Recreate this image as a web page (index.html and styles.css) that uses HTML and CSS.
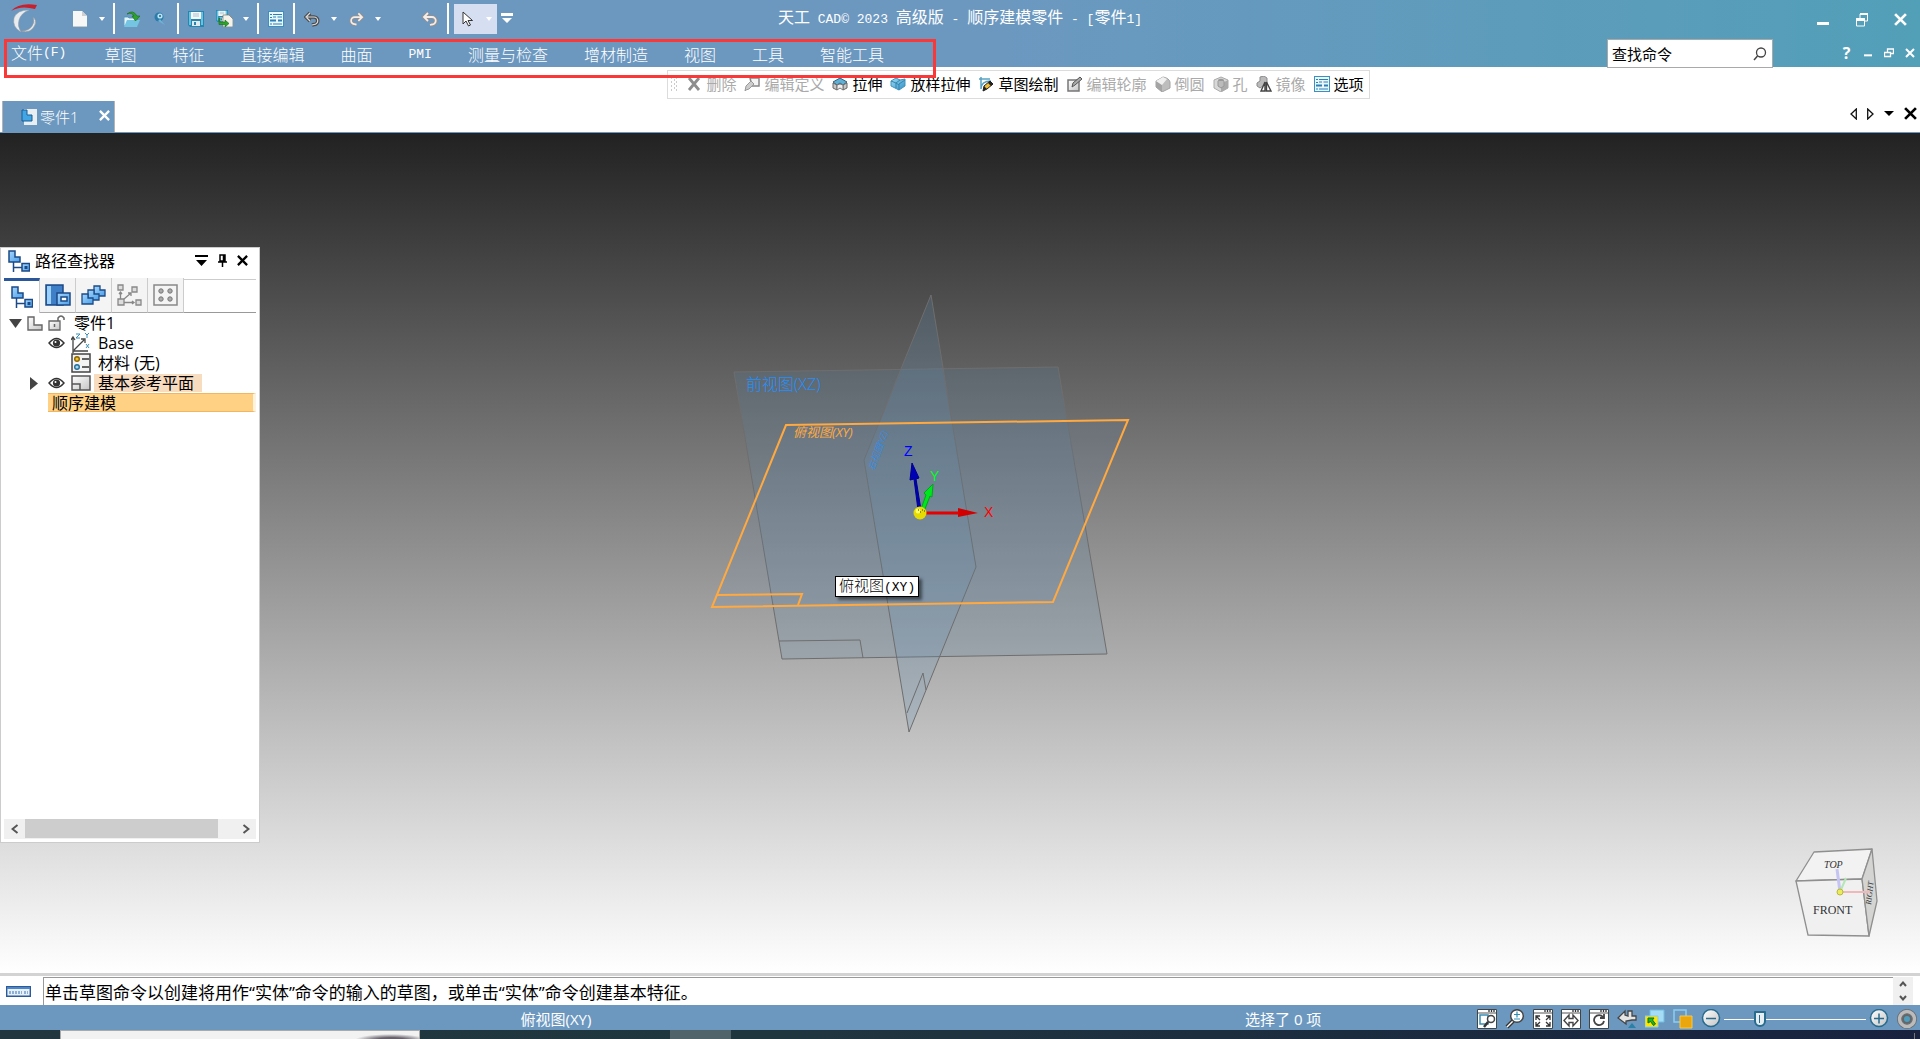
FILE: index.html
```
<!DOCTYPE html>
<html lang="zh-CN">

<head>
    <meta charset="UTF-8">
    <meta name="viewport" content="width=device-width, initial-scale=1.0">
    <title>天工 CAD 2023</title>
    <link rel="stylesheet" href="styles.css">
</head>

<body>
    <!-- shared icons -->
    <svg class="defs" aria-hidden="true">
        <defs>
            <linearGradient id="blue" x1="0" y1="0" x2="1" y2="1">
                <stop offset="0" stop-color="#9fdcf7" />
                <stop offset="1" stop-color="#2f8fc4" />
            </linearGradient>
            <linearGradient id="part" x1="0" y1="0" x2="1" y2="1">
                <stop offset="0" stop-color="#a5d6fb" />
                <stop offset="1" stop-color="#4aa0ea" />
            </linearGradient>
            <linearGradient id="gray" x1="0" y1="0" x2="1" y2="1">
                <stop offset="0" stop-color="#ffffff" />
                <stop offset="1" stop-color="#c4c4c4" />
            </linearGradient>
            <symbol id="caret" viewBox="0 0 6 4"><path d="M0 0h6L3 4z" fill="#fff" /></symbol>
            <symbol id="cross" viewBox="0 0 12 12"><path d="M1 1l10 10M11 1L1 11" stroke="currentColor" stroke-width="2.500" /></symbol>
            <symbol id="minimize" viewBox="0 0 12 12"><path d="M0 8h12v3H0z" fill="currentColor" /></symbol>
            <symbol id="restore" viewBox="0 0 12 14"><path d="M4 5V1h7.500v7H8M.5 6h8v7h-8z" fill="none" stroke="currentColor" /><path d="M0 5h9v3H0zM4 0h8v2H4z" fill="currentColor" /></symbol>
            <symbol id="undo" viewBox="0 0 16 16"><path d="M6 2L2 6l4 4M3 6h7a3.500 3.500 0 0 1 0 7.500L8 14" fill="none" stroke="#4c4c4c" stroke-width="3.600" /><path d="M6 2L2 6l4 4M3 6h7a3.500 3.500 0 0 1 0 7.500L8 14" fill="none" stroke="#ddd" stroke-width="1.200" /></symbol>
            <symbol id="undo-light" viewBox="0 0 16 16"><path d="M6 2L2 6l4 4M3 6h7a3.500 3.500 0 0 1 0 7.500L8 14" fill="none" stroke="#9a8f88" stroke-width="3.600" /><path d="M6 2L2 6l4 4M3 6h7a3.500 3.500 0 0 1 0 7.500L8 14" fill="none" stroke="#f3eeea" stroke-width="1.800" /></symbol>
            <symbol id="options" viewBox="0 0 16 16">
                <path d="M0 0h16v16H0z" fill="#3d8fc0" />
                <path d="M1 1h14v14H1z" fill="#e9f6fd" />
                <path d="M2 3h2v1H2zM2 6h2v1H2zM5 3h9v1H5zM5 5.500h3v1H5zM9.500 5.500H14v1H9.500zM2 8.500h6v2H2zM10 8.500h4v2h-4zM2 12.500h2v1H2zM5 12.500h9v1H5z" fill="#2c80b4" />
            </symbol>
            <symbol id="floppy" viewBox="0 0 16 16">
                <path d="M0 0h16v16H2l-2-2z" fill="#2586b0" />
                <path d="M1 1h2v13H1zM13 1h2v13h-2z" fill="#6cc0df" />
                <path d="M3 1h10v7H3z" fill="#f4f8fa" /><path d="M5 3h6M5 5h6" stroke="#a7c3cf" />
                <path d="M4 10h8v5H4z" fill="#dfe9ee" /><path d="M6 11h2v3H6z" fill="#2586b0" />
            </symbol>
            <symbol id="tree" viewBox="0 0 22 22">
                <path d="M1 1h6v6h5v5H1z" fill="url(#part)" stroke="#1c4a86" stroke-width="1.500" />
                <path d="M5.500 12v5.500H14M5.500 17v5" fill="none" stroke="#1c4a86" stroke-width="1.500" />
                <path d="M14 13.500h7.500v7.500H14z" fill="url(#part)" stroke="#1c4a86" stroke-width="1.500" /><path d="M16.500 16h3v3h-3z" fill="#1c4a86" />
            </symbol>
            <symbol id="eye" viewBox="0 0 17 12">
                <path d="M1 6q7.500-9 15 0-7.500 9-15 0z" fill="#fff" stroke="#333" stroke-width="1.400" />
                <circle cx="8.500" cy="6" r="3.600" fill="#333" /><circle cx="7.500" cy="5" r="1" fill="#fff" />
            </symbol>
            <symbol id="window" viewBox="0 0 20 20"><path d="M.5.5h19v19H.5z" fill="#fff" stroke="#444" /><path d="M1 4h18" stroke="#555" /><path d="M12 1v2M14.500 1v2M17 1v2" stroke="#333" stroke-width="1.300" /></symbol>
        </defs>
    </svg>

    <header class="app-header">
        <div class="title-row">
            <div class="quick-bar">
                <svg class="logo" viewBox="0 0 27 30">
                    <path d="M0 7Q8-2 26 1L24 5Q10 1 0 7z" fill="#c8202c" />
                    <path d="M18 6Q6 6 3 14q-2 9 7 14-4-6-2-12 2-7 10-10z" fill="#e8ecef" stroke="#9aa0a6" stroke-width=".5" />
                    <path d="M22 13q4 3 2 8-4 9-14 6 8 0 11-5 3-4 1-9z" fill="#e4e7ea" stroke="#8d949b" stroke-width=".6" />
                </svg>
                <button class="tool first" aria-label="新建"><svg width="14" height="16" viewBox="0 0 14 16"><path d="M0 0h9l5 5v11H0z" fill="#f7f7f7" /><path d="M9 0v5h5z" fill="#cfcfcf" /><path d="M0 15h14v1H0z" fill="#c9c9c9" /></svg></button>
                <button class="drop" aria-label="新建选项"><svg><use href="#caret" /></svg></button>
                <span class="sep"></span>
                <button class="tool" aria-label="打开"><svg width="16" height="16" viewBox="0 0 16 16"><path d="M0 6h4l1 1h8v8H0z" fill="#e8f3f8" stroke="#3b93bc" stroke-width=".8" /><path d="M3 9h13l-3 7H0z" fill="#74c4e2" /><path d="M3 3q6-5 10 2h3l-4.500 5L8 5h2Q8 1 3 3z" fill="#2ea32a" stroke="#146a16" stroke-width=".6" /></svg></button>
                <button class="tool" aria-label="固定"><svg width="12" height="14" viewBox="0 0 12 14"><circle cx="5" cy="5" r="4.500" fill="#2b7ca8" /><circle cx="6" cy="4" r="2.600" fill="#b9e2f3" /><path d="M6 7l5 6-7-4z" fill="#6fb2d3" /><circle cx="6" cy="4" r="1" fill="#1e678f" /></svg></button>
                <span class="sep"></span>
                <button class="tool" aria-label="保存"><svg width="16" height="16"><use href="#floppy" /></svg></button>
                <button class="tool" aria-label="另存为"><svg width="17" height="17" viewBox="0 0 17 17"><use href="#floppy" width="12" height="12" /><path d="M7 5h6l4 4v8H7z" fill="#f6f2ea" stroke="#776" stroke-width=".7" /><path d="M4 8v4h5v-2l4 3.500L9 17v-2.500H3V8z" fill="#2ea32a" stroke="#146a16" stroke-width=".6" /></svg></button>
                <button class="drop" aria-label="保存选项"><svg><use href="#caret" /></svg></button>
                <span class="sep"></span>
                <button class="tool" aria-label="选项"><svg width="16" height="16"><use href="#options" /></svg></button>
                <span class="sep"></span>
                <button class="tool" aria-label="撤消"><svg width="16" height="16"><use href="#undo" /></svg></button>
                <button class="drop" aria-label="撤消列表"><svg><use href="#caret" /></svg></button>
                <button class="tool redo" aria-label="重做"><svg width="15" height="16"><use href="#undo-light" /></svg></button>
                <button class="drop" aria-label="重做列表"><svg><use href="#caret" /></svg></button>
                <button class="tool back" aria-label="上一步"><svg width="16" height="16"><use href="#undo-light" /></svg></button>
                <span class="sep"></span>
                <button class="select-tool" aria-label="选择"><svg width="12" height="16" viewBox="0 0 12 16"><path d="M1 1v12l3-3 2.500 5 2-1L6 9.500h4.500z" fill="#fff" stroke="#333" /></svg><svg width="6" height="4"><use href="#caret" /></svg></button>
                <button class="customize" aria-label="自定义"><svg width="12" height="10" viewBox="0 0 12 10"><path d="M0 0h12v3H0zM1 5h10L6 10z" fill="#fff" /></svg></button>
            </div>
            <h1 class="app-title">天工<span class="mono"> CAD© 2023 </span>高级版<span class="mono"> - </span>顺序建模零件<span class="mono"> - [</span>零件<span class="mono">1]</span></h1>
            <div class="window-controls">
                <button aria-label="最小化"><svg width="12" height="12"><use href="#minimize" /></svg></button>
                <button aria-label="还原"><svg width="12" height="14"><use href="#restore" /></svg></button>
                <button aria-label="关闭"><svg width="13" height="13"><use href="#cross" /></svg></button>
            </div>
        </div>
        <div class="menu-row">
            <nav class="menu">
                <button class="file">文件<span class="mono">(F)</span></button>
                <button>草图</button>
                <button>特征</button>
                <button>直接编辑</button>
                <button>曲面</button>
                <button><span class="mono">PMI</span></button>
                <button>测量与检查</button>
                <button>增材制造</button>
                <button>视图</button>
                <button>工具</button>
                <button>智能工具</button>
            </nav>
            <label class="search">
                <input type="text" value="查找命令" aria-label="查找命令">
                <svg width="14" height="14" viewBox="0 0 14 14"><circle cx="8" cy="5.500" r="4.500" fill="none" stroke="#444" stroke-width="1.300" /><path d="M4.500 9L1 13" stroke="#444" stroke-width="1.500" /></svg>
            </label>
            <div class="doc-controls">
                <button class="help" aria-label="帮助">?</button>
                <button aria-label="最小化文档"><svg width="8" height="10"><use href="#minimize" /></svg></button>
                <button aria-label="还原文档"><svg width="10" height="10" viewBox="0 0 10 10"><path d="M3.500 4V1h6v4.500H7M.5 4.500h6v4h-6z" fill="none" stroke="#fff" stroke-width="1.300" /></svg></button>
                <button aria-label="关闭文档"><svg width="10" height="10" viewBox="0 0 10 10"><path d="M1 1l8 8M9 1L1 9" stroke="#fff" stroke-width="2" /></svg></button>
            </div>
        </div>
    </header>

    <div class="command-row">
        <div class="command-bar">
            <svg class="grip" width="7" height="14" viewBox="0 0 7 14"><path d="M0 1h1M5 1h1M3 3h1M0 5h1M5 5h1M3 7h1M0 9h1M5 9h1M3 11h1M0 13h1M5 13h1" stroke="#999" /></svg>
            <button disabled><svg viewBox="0 0 16 16"><path d="M3 2l10 12M13 2L3 14" stroke="#8d8d8d" stroke-width="2.800" /></svg>删除</button>
            <button disabled><svg viewBox="0 0 16 16"><path d="M6 2h9v8H8z" fill="#f4f4f4" stroke="#888" stroke-width="1.500" /><path d="M2 10l5-5 3 3-5 5-3 1-1 1z" fill="#ccc" stroke="#999" /></svg>编辑定义</button>
            <button><svg viewBox="0 0 16 16"><path d="M1 6l7-4 7 4-4 3-3-2-3 2z" fill="#5fb0d4" stroke="#2a6280" /><path d="M1 7l4 2v5l-4-2zM11 9l4-2v5l-4 2z" fill="#c8c8c8" stroke="#666" /><path d="M5 9l3-1 3 1v5l-3-2-3 2z" fill="#eee" stroke="#777" /></svg>拉伸</button>
            <button><svg viewBox="0 0 16 16"><path d="M1 5l5-3 4 2 5-1v7l-6 4-8-4z" fill="url(#blue)" stroke="#4193bb" /><path d="M1 5l5 2 4-3M6 7v5M9 14V8l6-4M6 7l3 2" fill="none" stroke="#3584ae" /></svg>放样拉伸</button>
            <button><svg viewBox="0 0 16 16"><path d="M1 3h11M3 1v12M3 13Q3 5 13 5" fill="none" stroke="#57a2c4" stroke-width="1.500" /><path d="M5 15l1-5 6-5 3 3-6 5z" fill="#f0bd38" stroke="#222" /><path d="M5 15l1-5 3 3zM12 5l3 3-2 2-3-3z" fill="#222" /></svg>草图绘制</button>
            <button disabled><svg viewBox="0 0 16 16"><path d="M1 4h11v11H1z" fill="url(#gray)" stroke="#777" stroke-width="1.500" /><path d="M5 11l1-4 7-6 2 2-7 6z" fill="#aaa" stroke="#555" /></svg>编辑轮廓</button>
            <button disabled><svg viewBox="0 0 16 16"><path d="M1 5l7-4q6 1 7 5v6l-8 4-6-5z" fill="#bdbdbd" stroke="#a2a2a2" /><path d="M1 5l6 4v7l-6-5z" fill="#a4a4a4" /><path d="M1 5l7-4 4 2-5 6z" fill="#f0f0f0" /></svg>倒圆</button>
            <button disabled><svg viewBox="0 0 16 16"><path d="M1 4l7-3 7 3v8l-7 4-7-4z" fill="#d8d8d8" stroke="#aaa" /><path d="M8 8l7-4v8l-7 4z" fill="#aaa" /><ellipse cx="8" cy="4.500" rx="3" ry="1.700" fill="#999" /><path d="M5 5v5l3 2 3-2V5" fill="#bbb" stroke="#999" /></svg>孔</button>
            <button disabled><svg viewBox="0 0 16 16"><path d="M4 1l4-1 3 2v5L4 12l-3-2V7l3-2z" fill="#bbb" stroke="#8b8b8b" /><path d="M5 15l4-9v9zM10.500 6l4.500 9h-4.500z" fill="#fff" stroke="#444" stroke-width="1.400" /></svg>镜像</button>
            <button><svg viewBox="0 0 16 16"><use href="#options" /></svg>选项</button>
        </div>
    </div>

    <div class="tab-row">
        <div class="doc-tab">
            <svg width="16" height="16" viewBox="0 0 16 16"><path d="M3 0h13v16H3z" fill="#e9eef2" /><path d="M1 1h5v5h5v6H1z" fill="#43a6e4" stroke="#185f96" /></svg>
            <span>零件1</span>
            <button aria-label="关闭零件1"><svg width="11" height="11"><use href="#cross" /></svg></button>
        </div>
        <div class="tab-nav">
            <button aria-label="上一个"><svg width="7" height="12" viewBox="0 0 7 12"><path d="M6.300 1v10L1 6z" fill="none" stroke="#111" stroke-width="1.300" /></svg></button>
            <button aria-label="下一个"><svg width="7" height="12" viewBox="0 0 7 12"><path d="M.7 1v10L6 6z" fill="none" stroke="#111" stroke-width="1.300" /></svg></button>
            <button aria-label="列表"><svg width="10" height="5" viewBox="0 0 10 5"><path d="M0 0h10L5 5z" /></svg></button>
            <button aria-label="关闭"><svg width="13" height="13"><use href="#cross" /></svg></button>
        </div>
    </div>

    <main class="viewport">
        <svg class="scene" viewBox="0 0 1920 840">
            <g class="plane">
                <path d="M734 239L1058 234 1107 521 782 526z" />
                <path class="line" d="M779 508l81-1 3 18" />
                <path class="right" d="M931 162L976 434 909 599 864 327z" />
                <path class="line" d="M907 580l16-40 3 17" />
            </g>
            <g class="plane-active">
                <path d="M786 292L1128 287 1053 469 712 474z" />
                <path class="line" d="M716 462l86-1-4 11" />
            </g>
            <text class="label-front" x="746" y="257">前视图(XZ)</text>
            <text class="label-top" x="793" y="304">俯视图(XY)</text>
            <text class="label-right" transform="translate(874 338) rotate(-70)">右视图(YZ)</text>
            <!-- origin triad -->
            <path d="M918 377l-4-31-4 1 2-17 7 15-3 1 5 31z" fill="#0000b4" stroke="#00008c" />
            <path d="M921 376l5-14-2-2 9-9-1 13-2-1-5 13z" fill="#00e61e" stroke="#00a814" />
            <path d="M958 375l20 5-20 4z" fill="#d20000" /><path d="M926 380h33" stroke="#e60000" stroke-width="3" />
            <circle cx="920" cy="380" r="6.500" fill="#e6dc00" /><circle cx="918" cy="378" r="2.500" fill="#ffff66" />
            <path d="M918 377h1M922 377h1M920 379h1M924 378h1" stroke="#333" />
            <text class="axis" x="904" y="323" fill="#0000ff">Z</text>
            <text class="axis" x="930" y="348" fill="#00ff1e">Y</text>
            <text class="axis" x="984" y="384" fill="#ff0000">X</text>
        </svg>

        <svg class="view-cube" width="90" height="95" viewBox="0 0 90 95">
            <g stroke="#8f8f8f" stroke-width="1.300" stroke-linejoin="round">
                <path d="M4 36L22 7 80 4 70 34z" fill="#f2f2f2" />
                <path d="M4 36l66-2 7 57-61-1z" fill="#f0f0f0" />
                <path d="M70 34L80 4l5 52-8 35z" fill="#d4d4d2" />
            </g>
            <text class="cube-top" x="32" y="23">TOP</text>
            <text class="cube-front" x="21" y="69">FRONT</text>
            <text class="cube-right" transform="translate(79 60) rotate(-84)">RIGHT</text>
            <path d="M48 47l-3-23" stroke="#c4c4f2" stroke-width="3" /><path d="M48 47l6-14" stroke="#b4e6b8" stroke-width="2" /><path d="M48 47h30" stroke="#f0b8b8" stroke-width="2" />
            <circle cx="48" cy="47" r="3" fill="#ecec5a" stroke="#b8b83a" />
        </svg>

        <div class="tooltip" role="tooltip">俯视图<span class="mono">(XY)</span></div>

        <aside class="pathfinder">
            <div class="panel-head">
                <svg width="22" height="22"><use href="#tree" /></svg>
                <h2>路径查找器</h2>
                <button aria-label="选项"><svg width="13" height="12" viewBox="0 0 13 12"><path d="M0 0h13v2H0zM1 5h11l-5.500 6z" /></svg></button>
                <button aria-label="固定"><svg width="9" height="13" viewBox="0 0 9 13"><path d="M2 1h5v6H2zM5.500 1v6M0 8h9M4.500 8v5" fill="none" stroke="#000" stroke-width="1.500" /></svg></button>
                <button aria-label="关闭"><svg width="11" height="11"><use href="#cross" /></svg></button>
            </div>
            <div class="panel-tabs">
                <button class="active" aria-label="路径查找器"><svg width="22" height="22"><use href="#tree" /></svg></button>
                <button aria-label="零件库"><svg width="26" height="22" viewBox="0 0 26 22"><path d="M1 1h17v20H1z" fill="#3f7fc8" stroke="#1c4a86" stroke-width="1.500" /><path d="M2 2h4v18H2z" fill="#9bd0f8" /><path d="M12 9h13v12H12z" fill="url(#part)" stroke="#1c4a86" stroke-width="1.500" /><path d="M16 13h6v4h-6z" fill="#fff" stroke="#1c4a86" stroke-width="1.500" /></svg></button>
                <button aria-label="零件族"><svg width="25" height="20" viewBox="0 0 25 20"><g fill="url(#part)" stroke="#1c4a86" stroke-width="1.300"><path d="M13 1h6v4h5v6H13z" /><path d="M7 5h6v4h5v6H7z" /><path d="M1 9h6v4h5v6H1z" /></g></svg></button>
                <button aria-label="图层"><svg width="25" height="22" viewBox="0 0 25 22"><g fill="#ddd" stroke="#888" stroke-width="1.300"><path d="M1 1h5v5H1zM15 3h5v5h-5zM1 15h6v6H1zM19 16h5v5h-5z" /><path d="M3.500 15V8M7 15l7-6M7 18.500h10M2 10l1.500-2L5 10M11 9h3v3M15 17l2 1.500-2 1.500" fill="none" /></g></svg></button>
                <button aria-label="传感器"><svg width="25" height="22" viewBox="0 0 25 22"><path d="M1 1h23v20H1z" fill="#f4f4f4" stroke="#888" stroke-width="1.500" /><g fill="#aaa" stroke="#777"><circle cx="8" cy="7" r="2.200" /><circle cx="17" cy="7" r="2.200" /><circle cx="8" cy="15" r="2.200" /><circle cx="17" cy="15" r="2.200" /></g></svg></button>
                <span class="rest"></span>
            </div>
            <ul class="tree">
                <li class="root">
                    <svg width="13" height="9" viewBox="0 0 13 9"><path d="M0 0h13L6.500 9z" fill="#444" /></svg>
                    <svg width="16" height="15" viewBox="0 0 16 15"><path d="M1 1h6v8h8v5H1z" fill="url(#gray)" stroke="#666" stroke-width="1.400" /></svg>
                    <svg width="17" height="16" viewBox="0 0 17 16"><path d="M1 6h11v9H1z" fill="url(#gray)" stroke="#666" stroke-width="1.300" /><path d="M10 6V3q3-4 6 0v2M6.500 9v3" fill="none" stroke="#666" stroke-width="1.500" /></svg>
                    <span>零件1</span>
                </li>
                <li>
                    <svg class="eye"><use href="#eye" /></svg>
                    <svg class="icon" viewBox="0 0 20 20"><path d="M2 20V4M0 7l2-3 2 3M2 18h15M3 17L13 7M10 6h4v4" fill="none" stroke="#444" stroke-width="1.300" /><path d="M5 1h4L5 5h4M14 0l2 2 2-2M16 2v3M15 11l3 4M18 11l-3 4" fill="none" stroke="#3b8fb5" /></svg>
                    <span>Base</span>
                </li>
                <li>
                    <svg class="eye"></svg>
                    <svg class="icon" viewBox="0 0 20 20"><path d="M1 1h18v18H1z" fill="#f3f3f3" stroke="#444" stroke-width="1.500" /><circle cx="6" cy="6" r="2.300" fill="#f1c232" stroke="#8a6500" stroke-width="1.400" /><circle cx="6" cy="14" r="2.300" fill="#9fd8f2" stroke="#256c96" stroke-width="1.400" /><path d="M11 6h7M11 14h7" stroke="#333" stroke-width="1.500" /></svg>
                    <span>材料 (无)</span>
                </li>
                <li>
                    <svg class="expand" viewBox="0 0 8 13"><path d="M0 0v13l8-6.500z" fill="#444" /></svg>
                    <svg class="eye"><use href="#eye" /></svg>
                    <svg class="icon" viewBox="0 0 20 20"><path d="M1 3h18v14H1z" fill="url(#gray)" stroke="#555" stroke-width="1.500" /><path d="M1 11h8v6" fill="none" stroke="#555" stroke-width="1.500" /></svg>
                    <span class="hover">基本参考平面</span>
                </li>
                <li class="mode"><span>顺序建模</span></li>
            </ul>
            <div class="hscroll">
                <button aria-label="向左"><svg width="8" height="10" viewBox="0 0 8 10"><path d="M6.500 1l-5 4 5 4" /></svg></button>
                <span class="track"><span class="thumb"></span></span>
                <button aria-label="向右"><svg width="8" height="10" viewBox="0 0 8 10"><path d="M1.500 1l5 4-5 4" /></svg></button>
            </div>
        </aside>
    </main>

    <div class="prompt-bar">
        <svg width="25" height="11" viewBox="0 0 25 11"><path d="M.7.7h23.600v9.600H.7z" fill="#e8f1fa" stroke="#2a5a9c" stroke-width="1.400" /><path d="M1 1h23v2H1z" fill="#4f86c6" /><path d="M3 6.500h13M18 6.500h4" stroke="#8db0d8" stroke-width="3" stroke-dasharray="2 1" /></svg>
        <p>单击草图命令以创建将用作“实体”命令的输入的草图，或单击“实体”命令创建基本特征。</p>
        <div class="spinner">
            <button aria-label="向上"><svg width="8" height="6" viewBox="0 0 8 6"><path d="M1 5l3-3.500L7 5" /></svg></button>
            <button aria-label="向下"><svg width="8" height="6" viewBox="0 0 8 6"><path d="M1 1l3 3.500L7 1" /></svg></button>
        </div>
    </div>

    <footer class="status-bar">
        <span class="status-item">俯视图(XY)</span>
        <span class="status-count">选择了 0 项</span>
        <div class="view-tools">
            <button aria-label="缩放区域"><svg viewBox="0 0 20 20"><use href="#window" /><path d="M3 6h8v9H3z" fill="#fff" stroke="#3b8fb5" stroke-width="1.500" /><circle cx="14" cy="10" r="3.500" fill="#fff" stroke="#444" stroke-width="1.500" /><path d="M11 13l-4 5" stroke="#333" stroke-width="2.500" /></svg></button>
            <button aria-label="缩放"><svg viewBox="0 0 20 20"><path d="M8 12l-6 6" stroke="#333" stroke-width="4" /><path d="M8 12l-6 6" stroke="#fff" stroke-width="1.500" /><circle cx="12" cy="7" r="6.300" fill="#fff" stroke="#444" stroke-width="1.500" /><path d="M9 5.500h6M12 2.500v6M9 10h6" stroke="#2d8db5" stroke-width="1.200" /></svg></button>
            <button aria-label="适合"><svg viewBox="0 0 20 20"><use href="#window" /><path d="M7 7H3v4M3 13v4h4M13 7h4v4M17 13v4h-4M3 7l4 4M17 7l-4 4M3 17l4-4M17 17l-4-4" fill="none" stroke="#333" stroke-width="1.300" /></svg></button>
            <button aria-label="平移"><svg viewBox="0 0 20 20"><use href="#window" /><path d="M8 6l-5 5.500L8 17v-3.500h4V17l5-5.500L12 6v3.500H8z" fill="#fff" stroke="#444" stroke-width="1.400" /></svg></button>
            <button aria-label="旋转"><svg viewBox="0 0 20 20"><use href="#window" /><path d="M14 8a5 5 0 1 0 1 4M15 5v4h-4" fill="none" stroke="#444" stroke-width="1.800" /></svg></button>
            <button aria-label="注视"><svg viewBox="0 0 20 20"><path d="M1 9l7-7v4l3 1V2h4v5h4v4h-4l-6 1v3z" fill="#e4e4e4" stroke="#444" stroke-width="1.300" /><path d="M15 14l4 5h-8z" fill="#2c7fa5" /></svg></button>
            <button aria-label="视图样式"><svg viewBox="0 0 20 20"><path d="M5 1h14v12H5z" fill="#a5dcf4" stroke="#6dbfe2" /><path d="M0 7h13v11H0z" fill="#ffe600" stroke="#88cdee" /><path d="M3 9h6L7.500 11l3 4-2 1.500-3-4L3 14z" fill="#21b321" stroke="#0d700f" /></svg></button>
            <button aria-label="颜色"><svg viewBox="0 0 20 20"><path d="M1 1h12v12H1z" fill="none" stroke="#8ccdf0" stroke-width="1.500" /><path d="M7 7h12v12H7z" fill="#eaa60c" stroke="#f6c84a" /></svg></button>
            <button aria-label="缩小"><svg viewBox="0 0 20 20"><circle cx="10" cy="9" r="8.500" fill="url(#gray)" stroke="#276b8d" stroke-width="1.500" /><path d="M5 9.500h10" stroke="#276b8d" stroke-width="1.500" /></svg></button>
            <input type="range" min="0" max="100" value="23" aria-label="缩放比例">
            <button aria-label="放大"><svg viewBox="0 0 20 20"><circle cx="10" cy="9" r="8.500" fill="url(#gray)" stroke="#276b8d" stroke-width="1.500" /><path d="M5 9.500h10M10 4.500v10" stroke="#276b8d" stroke-width="1.500" /></svg></button>
            <button aria-label="设置"><svg viewBox="0 0 20 20"><circle cx="10" cy="10" r="7.500" fill="none" stroke="#666" stroke-width="5" /><circle cx="10" cy="10" r="7.500" fill="none" stroke="#bbb" stroke-width="3.500" /><circle cx="10" cy="10" r="4" fill="#4f9dbd" stroke="#666" stroke-width="2" /></svg></button>
        </div>
    </footer>

    <div class="taskbar">
        <span class="taskbar-search"></span>
        <span class="taskbar-app"></span>
        <span class="clock">11:50</span>
    </div>
</body>

</html>
```
FILE: styles.css
```
* {
    box-sizing: border-box;
}

body {
    margin: 0;
    height: 100vh;
    display: flex;
    flex-direction: column;
    overflow: hidden;
    background-color: #fff;
    color: #000;
    font-family: "Open Sans", "Noto Sans CJK SC", sans-serif;
    font-size: 16px;
    line-height: 20px;
}

h1,
h2,
p,
ul {
    margin: 0;
    padding: 0;
    font-size: 16px;
    font-weight: normal;
    list-style: none;
}

button {
    display: flex;
    align-items: center;
    justify-content: center;
    flex: none;
    margin: 0;
    padding: 0;
    border: none;
    background: none;
    color: inherit;
    font: inherit;
    white-space: nowrap;
}

svg {
    display: block;
    flex: none;
}

.defs {
    position: absolute;
    width: 0;
    height: 0;
}

.mono {
    font-family: "Liberation Mono", monospace;
    font-size: 13px;
    white-space: pre;
}

/* header */
.app-header {
    flex: none;
    height: 67px;
    background: linear-gradient(90deg, #6c98c0 0%, #6c98c0 52%, #529fb8 100%);
    color: #fff;
    font-weight: 300;
}

.title-row {
    display: grid;
    grid-template-columns: 1fr auto 1fr;
    align-items: center;
    height: 39px;
    padding-bottom: 2px;
}

.quick-bar {
    display: flex;
    align-items: center;
    gap: 4px;
    height: 36px;
    padding-left: 11px;
}

.logo {
    width: 27px;
    height: 30px;
}

.tool {
    width: 24px;
    height: 30px;
}

.tool.first {
    margin-left: 26px;
}

.tool.back {
    margin-left: 30px;
}

.redo svg {
    transform: scaleX(-1);
}

.drop {
    width: 12px;
    height: 30px;
}

.drop svg {
    width: 6px;
    height: 4px;
}

.sep {
    width: 2px;
    height: 31px;
    margin: 0 1px;
    background-color: #fff;
}

.select-tool {
    width: 43px;
    height: 30px;
    justify-content: space-between;
    padding: 0 5px 0 8px;
    background-color: #d5dff1;
}

.customize {
    padding-bottom: 2px;
}

.app-title {
    white-space: nowrap;
}

.window-controls {
    display: flex;
    justify-content: flex-end;
}

.window-controls button {
    width: 39px;
    height: 36px;
    padding-top: 2px;
}

.menu-row {
    display: flex;
    height: 28px;
}

/* nav frame hangs below the header */
.menu {
    position: relative;
    display: flex;
    gap: 36px;
    margin: 0 auto 0 4px;
    padding: 4px 52px 0 7px;
}

.menu::after {
    content: "";
    position: absolute;
    inset: 0 0 -11px 0;
    z-index: 2;
    border: 3px solid #fb3838;
    pointer-events: none;
}

.menu button {
    height: 23px;
}

.menu .file {
    height: 19px;
    padding-right: 2px;
}

.search {
    display: flex;
    align-items: center;
    width: 166px;
    height: 29px;
    padding: 0 5px 0 4px;
    border: 1px solid #a9a9a9;
    background-color: #fff;
}

.search input {
    flex: 1;
    min-width: 0;
    padding: 0;
    border: none;
    outline: none;
    color: #000;
    font: inherit;
    font-size: 15px;
    font-weight: 400;
}

.doc-controls {
    display: flex;
    margin-left: 63px;
}

.doc-controls button {
    width: 21px;
    height: 27px;
}

.doc-controls .help {
    font-size: 16px;
    font-weight: 700;
}

/* command bar */
.command-row {
    flex: none;
    display: flex;
    justify-content: center;
    padding: 3px 0 2px 117px;
}

.command-bar {
    display: flex;
    align-items: center;
    gap: 8px;
    height: 29px;
    padding: 0 5px 2px 3px;
    border: 1px solid #dcdcdc;
    font-size: 15px;
}

.command-bar button {
    gap: 4px;
}

.command-bar button svg {
    width: 16px;
    height: 16px;
}

.command-bar button:disabled {
    color: #aaa;
}

/* document tabs */
.tab-row {
    flex: none;
    display: flex;
    justify-content: space-between;
    height: 32px;
    border-bottom: 1px solid #6c98c0;
}

.doc-tab {
    display: flex;
    align-items: center;
    gap: 3px;
    width: 113px;
    margin-left: 2px;
    padding: 0 4px 0 18px;
    border: 1px solid #b4b4b4;
    border-width: 0 1px;
    background-color: #6c98c0;
    color: #fff;
    font-size: 15px;
    font-weight: 300;
}

.doc-tab button {
    margin-left: auto;
    padding-bottom: 2px;
}

.tab-nav {
    display: flex;
    align-items: center;
    gap: 10px;
    padding: 0 3px 6px 0;
}

/* model window */
.viewport {
    position: relative;
    flex: 1;
    min-height: 0;
    background: linear-gradient(#222 0%, #fff 100%);
}

.scene {
    width: 100%;
    height: 100%;
}

.plane path {
    fill: rgba(95, 135, 170, 0.2);
    stroke: #6e6e6e;
}

.plane .right {
    fill: rgba(95, 145, 190, 0.2);
}

.plane-active path {
    fill: rgba(95, 135, 170, 0.14);
    stroke: #ffa940;
    stroke-width: 2;
}

.plane .line,
.plane-active .line {
    fill: none;
}

.label-front,
.label-right {
    fill: #1e90ff;
    font-size: 16px;
    font-weight: 300;
}

.label-right {
    font-size: 9px;
    font-style: italic;
}

.label-top {
    fill: #ffa940;
    font-size: 13px;
    font-style: italic;
}

.axis {
    font-family: "Liberation Sans", sans-serif;
    font-size: 14px;
}

.view-cube {
    position: absolute;
    right: 38px;
    bottom: 33px;
}

.view-cube text {
    fill: #333;
    font-family: "Liberation Serif", serif;
    font-size: 12px;
}

.view-cube .cube-top {
    font-size: 10px;
    font-style: italic;
}

.view-cube .cube-right {
    font-size: 8px;
    font-style: italic;
}

.tooltip {
    position: absolute;
    top: 443px;
    left: calc(50% - 125px);
    padding: 0 3px;
    border: 1px solid #000;
    background-color: #fff;
    box-shadow: 3px 3px 3px rgba(0, 0, 0, 0.5);
    font-size: 15px;
    font-weight: 300;
    line-height: 16px;
}

/* pathfinder panel */
.pathfinder {
    position: absolute;
    top: 114px;
    bottom: 130px;
    left: 0;
    display: flex;
    flex-direction: column;
    width: 260px;
    padding: 0 3px;
    border: 1px solid #ccc;
    background-color: #fff;
}

.panel-head {
    display: flex;
    align-items: center;
    gap: 10px;
    height: 30px;
    padding: 0 8px 5px 4px;
}

.panel-head h2 {
    margin: 0 auto 0 -5px;
}

.panel-tabs {
    display: flex;
    height: 35px;
}

.panel-tabs button {
    width: 36px;
    border-right: 1px solid #ccc;
    border-bottom: 1px solid #aaa;
    background-color: #f4f4f4;
}

.panel-tabs .active {
    border-top: 3px solid #2a579a;
    border-bottom: none;
    background-color: #fff;
}

.rest {
    flex: 1;
    margin-top: 1px;
    border-top: 1px solid #ccc;
    border-bottom: 1px solid #999;
}

.tree {
    flex: 1;
}

.tree li {
    position: relative;
    display: flex;
    align-items: center;
    height: 20px;
    padding-left: 44px;
    white-space: nowrap;
}

.tree .root {
    gap: 5px;
    padding-left: 5px;
}

.eye {
    width: 17px;
    height: 12px;
    margin-right: 6px;
}

.icon {
    width: 20px;
    height: 20px;
    margin-right: 3px;
}

.expand {
    width: 8px;
    height: 13px;
    margin: 0 10px 0 -18px;
}

.tree span {
    padding-left: 4px;
}

.tree .hover {
    height: 18px;
    padding-right: 8px;
    background-color: #f8dcc0;
    line-height: 18px;
}

.tree .mode {
    height: 19px;
    margin-left: 44px;
    padding-left: 0;
    border: 1px solid #f2b660;
    border-width: 1px 0;
    border-right: 3px solid #fff3e0;
    background-color: #ffd185;
}

.hscroll {
    display: flex;
    height: 20px;
    margin-bottom: 3px;
    background-color: #f0f0f0;
}

.hscroll button {
    width: 21px;
}

.hscroll path,
.spinner path {
    fill: none;
    stroke: #555;
    stroke-width: 2;
}

.track {
    flex: 1;
    padding-bottom: 1px;
}

.thumb {
    display: block;
    width: 92%;
    height: 100%;
    background-color: #cdcdcd;
}

/* prompt bar */
.prompt-bar {
    flex: none;
    display: flex;
    align-items: center;
    height: 32px;
    padding: 1px 7px 0 6px;
    border-top: 3px solid #d3d3d3;
}

.prompt-bar p {
    flex: 1;
    align-self: stretch;
    margin-left: 12px;
    padding: 4px 0 0 1px;
    border: 1px solid #999;
    border-width: 1px 0 0 1px;
    font-size: 17px;
    line-height: 22px;
}

.spinner {
    display: flex;
    flex-direction: column;
    width: 20px;
    align-self: stretch;
    background-color: #f0f0f0;
}

.spinner button {
    flex: 1;
}

/* status bar */
.status-bar {
    flex: none;
    display: grid;
    grid-template-columns: 38% 1fr auto;
    align-items: center;
    height: 25px;
    padding: 3px 3px 0 0;
    background-color: #6c98c0;
    color: #fff;
    font-size: 15px;
}

.status-item {
    justify-self: end;
    width: 208px;
}

.status-count {
    justify-self: end;
    width: 232px;
}

.view-tools {
    display: flex;
    align-items: center;
    gap: 8px;
}

.view-tools svg {
    width: 20px;
    height: 20px;
}

.view-tools input {
    appearance: none;
    width: 142px;
    height: 20px;
    margin: 0 -5px;
    background: linear-gradient(#fff, #fff) center / 100% 1px no-repeat;
}

.view-tools input::-webkit-slider-thumb {
    appearance: none;
    width: 12px;
    height: 16px;
    border: 2px solid #276b8d;
    border-radius: 1px 1px 6px 6px;
    background: linear-gradient(#276b8d, #276b8d) center / 1px 8px no-repeat #e6eef2;
}

/* desktop taskbar, cut by the screen edge */
.taskbar {
    flex: none;
    display: flex;
    height: 9px;
    overflow: hidden;
    background: linear-gradient(90deg, #21363f 0%, #20363f 40%, #18223f 100%);
    color: #fff;
    font-size: 13px;
}

.taskbar-search {
    width: 360px;
    margin-left: 60px;
    border: 1px solid #aaa;
    border-bottom: none;
    background: radial-gradient(ellipse 36px 6px at 330px 9px, #66606a 40%, #f2f2f2 100%);
}

.taskbar-app {
    width: 61px;
    margin-left: 250px;
    background-color: #50636a;
}

.clock {
    margin: 3px 5px 0 auto;
    padding-right: 89px;
    border-right: 1px solid #777;
}
```
